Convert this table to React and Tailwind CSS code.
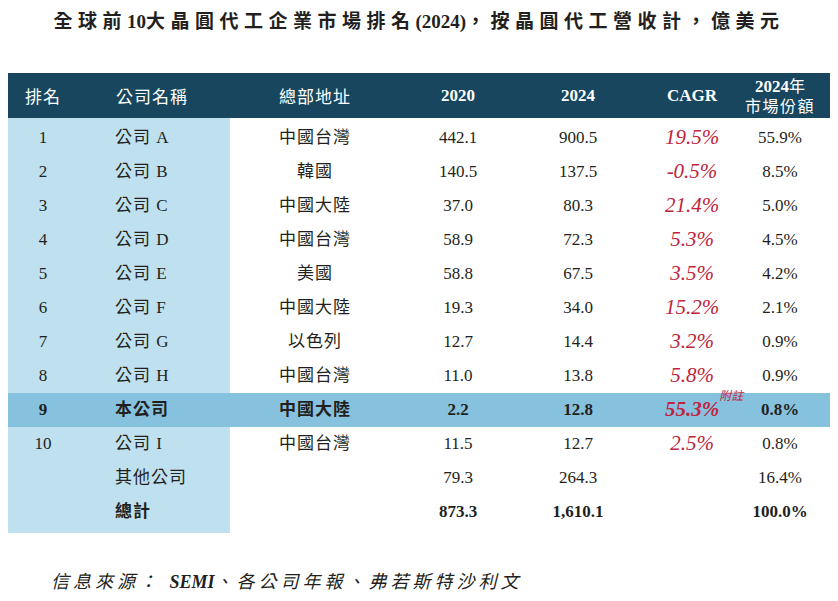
import React from "react";

const rows = [
  ["1", "公司 A", "中國台灣", "442.1", "900.5", "19.5%", "55.9%"],
  ["2", "公司 B", "韓國", "140.5", "137.5", "-0.5%", "8.5%"],
  ["3", "公司 C", "中國大陸", "37.0", "80.3", "21.4%", "5.0%"],
  ["4", "公司 D", "中國台灣", "58.9", "72.3", "5.3%", "4.5%"],
  ["5", "公司 E", "美國", "58.8", "67.5", "3.5%", "4.2%"],
  ["6", "公司 F", "中國大陸", "19.3", "34.0", "15.2%", "2.1%"],
  ["7", "公司 G", "以色列", "12.7", "14.4", "3.2%", "0.9%"],
  ["8", "公司 H", "中國台灣", "11.0", "13.8", "5.8%", "0.9%"],
  ["9", "本公司", "中國大陸", "2.2", "12.8", "55.3%", "0.8%", "hl"],
  ["10", "公司 I", "中國台灣", "11.5", "12.7", "2.5%", "0.8%"],
  ["", "其他公司", "", "79.3", "264.3", "", "16.4%"],
  ["", "總計", "", "873.3", "1,610.1", "", "100.0%", "total"],
];

const grid = "grid grid-cols-[70px_152px_170px_116px_124px_104px_72px_14px] items-center";

export default function App() {
  return (
    <div className="w-[838px] h-[601px] bg-white text-[#231f20] font-['Liberation_Serif','Noto_Sans_CJK_TC',serif] overflow-hidden">
      <div className="h-[73px] pt-[10px] text-center text-[19px] font-bold tracking-[5.5px] leading-[24px]">
        全球前<span className="tracking-[0px]">10</span>大晶圓代工企業市場排名<span className="tracking-[0px]">(2024)</span>，按晶圓代工營收計，億美元
      </div>
      <div className="px-[8px]">
        <div className={`${grid} h-[45px] bg-[#17465e] text-white text-[17px]`}>
          <div className="text-center font-['Noto_Sans_CJK_TC',sans-serif] tracking-[1px]">排名</div>
          <div className="pl-[38px] font-['Noto_Sans_CJK_TC',sans-serif] tracking-[1px]">公司名稱</div>
          <div className="text-center font-['Noto_Sans_CJK_TC',sans-serif] tracking-[1px]">總部地址</div>
          <div className="text-center font-bold">2020</div>
          <div className="text-center font-bold">2024</div>
          <div className="text-center font-bold">CAGR</div>
          <div className="text-center text-[16px] leading-[19px] whitespace-nowrap">
            <div className="font-bold text-[17px]">2024<span className="font-['Noto_Sans_CJK_TC',sans-serif] font-normal text-[16px]">年</span></div>
            <div className="font-['Noto_Sans_CJK_TC',sans-serif] tracking-[1.5px]">市場份額</div>
          </div>
          <div />
        </div>
        <div className="pt-[3px] pb-[4px] bg-[linear-gradient(to_right,#bee0ef_222px,#ffffff_222px)]">
          {rows.map((r) => {
            const hl = r[7] === "hl";
            const total = r[7] === "total";
            const bold = hl || total;
            return (
              <div key={r[1]} className={`${grid} h-[34px] text-[17px] ${hl ? "bg-[#86c1de]" : ""} ${bold ? "font-bold" : ""}`}>
                <div className="text-center">{r[0]}</div>
                <div className="pl-[37px] tracking-[1px]">{r[1]}</div>
                <div className="text-center tracking-[1px]">{r[2]}</div>
                <div className="text-center">{r[3]}</div>
                <div className="text-center">{r[4]}</div>
                <div className="text-center text-[#c0243c] italic text-[21px]">
                  {r[5] && (
                    <span className="relative">
                      {r[5]}
                      {hl && (
                        <span className="absolute left-full top-[-11px] text-[12px] font-normal font-['Noto_Sans_CJK_TC',sans-serif] italic whitespace-nowrap">附註</span>
                      )}
                    </span>
                  )}
                </div>
                <div className="text-center">{r[6]}</div>
                <div />
              </div>
            );
          })}
        </div>
      </div>
      <div className="pt-[37px] pl-[51px] text-[18px] italic tracking-[4px] leading-[24px]">
        信息來源： <span className="font-bold tracking-[0px]">SEMI</span>、各公司年報、弗若斯特沙利文
      </div>
    </div>
  );
}
